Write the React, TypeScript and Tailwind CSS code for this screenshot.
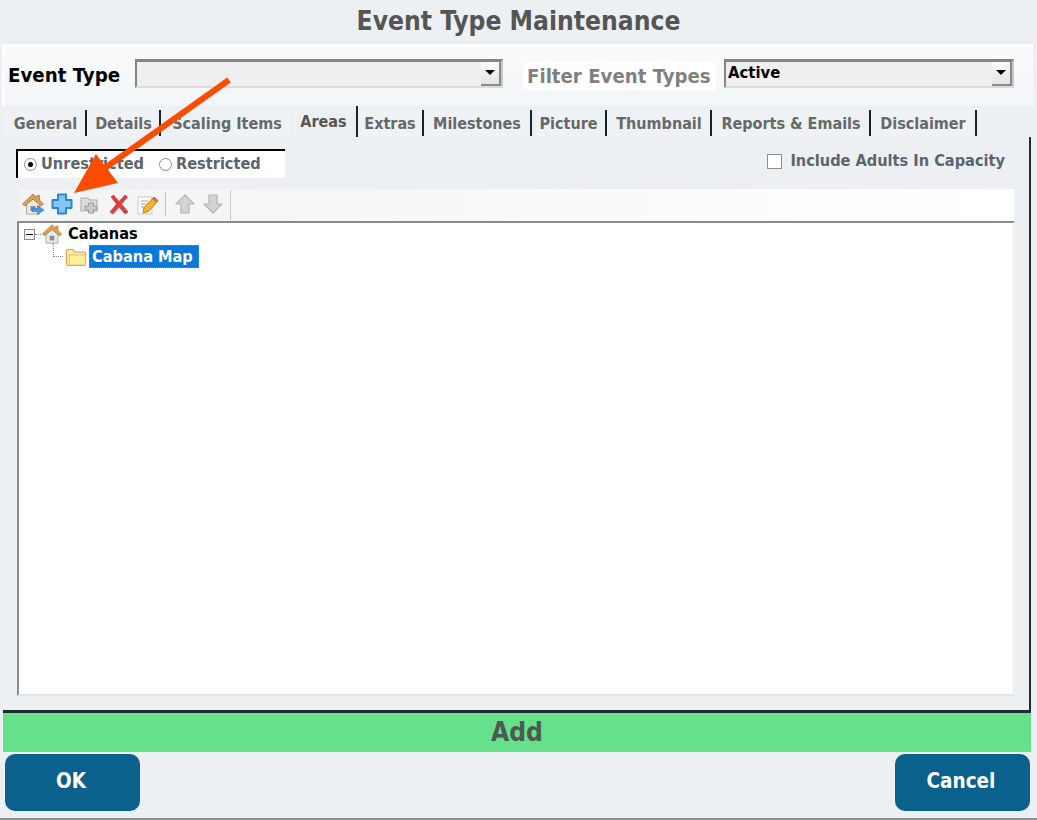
import type { ReactNode } from 'react';

const FONT = "font-['DejaVu_Sans_Condensed','DejaVu_Sans',Verdana,sans-serif]";

const tabs = [
    { label: 'General', cls: 'w-[84px] pl-[3px]' },
    { label: 'Details', cls: 'w-[74px] pl-[1px]' },
    { label: 'Scaling Items', cls: 'w-[130px] pl-[2px]', noSep: true },
    { label: 'Areas', cls: 'w-[67px]', active: true },
    { label: 'Extras', cls: 'w-[66px]' },
    { label: 'Milestones', cls: 'w-[108px]' },
    { label: 'Picture', cls: 'w-[75px]' },
    { label: 'Thumbnail', cls: 'w-[105px] pl-[1px]' },
    { label: 'Reports & Emails', cls: 'w-[159px] pl-[1px]' },
    { label: 'Disclaimer', cls: 'w-[106px]' },
];

function DropArrow() {
    return (
        <div className="w-[20px] h-[24px] bg-gradient-to-b from-[#fafafa] to-[#e4e4e4] border-r-2 border-b-2 border-[#8a8a8a] flex items-center justify-center">
            <div className="w-0 h-0 border-l-[5px] border-r-[5px] border-t-[5px] border-l-transparent border-r-transparent border-t-black"></div>
        </div>
    );
}

function Select({ value, cls }: { value?: string; cls: string }) {
    return (
        <div className={`${cls} h-[29px] mb-[4px] bg-[#efefef] border-t-[3px] border-l-2 border-[#858585] border-r-2 border-r-[#c8c8c8] border-b-2 border-b-[#dcdcdc] flex items-center justify-between`}>
            <span className="text-[16.5px] leading-[20px] font-bold text-black pl-[2px] -mt-[2px]">{value}</span>
            <DropArrow />
        </div>
    );
}

function Radio({ checked, label }: { checked?: boolean; label: string }) {
    return (
        <div className="flex items-center gap-[4px]">
            <div className="w-[13px] h-[13px] rounded-full bg-white border border-[#8f8f8f] flex items-center justify-center">
                {checked && <div className="w-[5px] h-[5px] rounded-full bg-black"></div>}
            </div>
            <span className="text-[16.2px] font-bold text-[#5c6470]">{label}</span>
        </div>
    );
}

function Icon({ children, cls }: { children: ReactNode; cls?: string }) {
    return (
        <svg width="24" height="24" viewBox="0 0 24 24" className={`shrink-0 ${cls ?? ''}`}>
            {children}
        </svg>
    );
}

function HouseGlyph() {
    return (
        <>
            <path d="M5.5 12 L12 7 L18.5 12 V22 H5.5 Z" fill="#e9e9e9" stroke="#a8a8a8" strokeWidth="1" />
            <path d="M12 2 L1.5 12 L4 14 L12 7 L20 14 L22.5 12 L18.5 8.2 V3.5 H16 V5.8 Z" fill="#dd9f55" stroke="#b3762e" strokeWidth="0.8" strokeLinejoin="round" />
            <rect x="9.5" y="14" width="5" height="5" fill="#8d8d8d" />
        </>
    );
}

function ToolbarIcons() {
    return (
        <div className="flex items-center gap-[4.5px] pl-[2px] -mt-[2px]">
            <Icon>
                <HouseGlyph />
                <path d="M11 16.5 H16.5 V13.5 L23 18 L16.5 22.5 V19.5 H11 Z" fill="#4a9ae0" stroke="#2f78bd" strokeWidth="0.6" />
            </Icon>
            <Icon>
                <path d="M8 2.5 H16 V8 H21.5 V16 H16 V21.5 H8 V16 H2.5 V8 H8 Z" fill="#86c5f4" stroke="#2a86d2" strokeWidth="2" strokeLinejoin="round" />
            </Icon>
            <Icon>
                <path d="M3 6 H10 L12 8 H19 V19 H3 Z" fill="#dcdcdc" stroke="#b4b4b4" strokeWidth="1.2" />
                <path d="M10.5 11 H15.5 V14 H19 V18 H15.5 V21 H10.5 V18 H7 V14 H10.5 Z" fill="#c8c8c8" stroke="#9c9c9c" strokeWidth="1" />
            </Icon>
            <Icon>
                <path d="M4 5 L6.5 3 L12 9.5 L18 3 L20.5 5 L14.5 12 L21 20 L18 22 L12 15 L6 22 L3 20 L9.5 12 Z" fill="#dd3f40" stroke="#b83033" strokeWidth="0.6" />
            </Icon>
            <Icon>
                <rect x="3" y="5" width="14" height="17" fill="#fbfbfb" stroke="#c9c9c9" />
                <path d="M6 9 H13 M6 12 H11 M6 15 H9" stroke="#a9a9a9" strokeWidth="1" />
                <path d="M8 21 L9 15.5 L19 5 L23 8.5 L13.5 19.5 Z" fill="#f3b52e" stroke="#b87a14" strokeWidth="0.9" />
                <path d="M19 5 L23 8.5 L21.3 10.4 L17.2 6.9 Z" fill="#e2604a" />
            </Icon>
            <div className="w-px h-[24px] bg-[#c4c4c4] ml-[1.5px] mr-[2.5px]"></div>
            <Icon cls="-mr-[1px]">
                <path d="M12 3 L21 12 H16 V21 H8 V12 H3 Z" fill="#d4d4d4" stroke="#b4b4b4" strokeWidth="1.2" strokeLinejoin="round" />
            </Icon>
            <Icon>
                <path d="M12 21 L21 12 H16 V3 H8 V12 H3 Z" fill="#d4d4d4" stroke="#b4b4b4" strokeWidth="1.2" strokeLinejoin="round" />
            </Icon>
            <div className="w-px h-[30px] bg-[#c8c8c8] ml-[1px] mt-[2px]"></div>
        </div>
    );
}

function Tree() {
    return (
        <div className="flex-1 ml-[1px] mr-[2px] bg-white border-t-2 border-l-2 border-[#8b8b8b] border-r-2 border-r-[#eeeeee] border-b-2 border-b-[#e4e4e4] pl-[4px]">
            <div className="flex items-center h-[22px]">
                <div className="w-[11px] h-[11px] border border-[#8a8a8a] bg-[#f4f4f4] flex items-center justify-center ml-[1px]">
                    <div className="w-[7px] h-px bg-black"></div>
                </div>
                <div className="w-[6px] border-t border-dotted border-[#8a8a8a]"></div>
                <svg width="22" height="22" viewBox="0 0 24 24" className="shrink-0">
                    <HouseGlyph />
                </svg>
                <span className="ml-[5px] text-[16.2px] font-bold text-black">Cabanas</span>
            </div>
            <div className="flex items-center h-[23px]">
                <div className="ml-[30px] w-[10px] h-[14px] -mt-[14px] border-l border-b border-dotted border-[#8a8a8a]"></div>
                <svg width="22" height="20" viewBox="0 0 22 20" className="shrink-0 ml-[2px]">
                    <path d="M1.5 17 V4 Q1.5 2.5 3 2.5 H8 L10 5 H19 Q20.5 5 20.5 6.5 V17 Q20.5 18.5 19 18.5 H3 Q1.5 18.5 1.5 17 Z" fill="#fbe9a8" stroke="#d7a54a" strokeWidth="1.2" />
                    <rect x="4.5" y="8" width="16" height="10" fill="#fdf09a" stroke="#e0b85c" strokeWidth="0.8" />
                </svg>
                <span className="ml-[2px] pl-[2px] pr-[5px] h-[23px] leading-[21px] bg-[#0a78d7] border border-dotted border-[#c57a28] text-[16.2px] font-bold text-white">Cabana Map</span>
            </div>
        </div>
    );
}

export default function App() {
    return (
        <div className={`${FONT} relative w-[1037px] h-[820px] bg-[#ecf0f3] overflow-hidden flex flex-col`}>
            {/* Title */}
            <div className="h-[44px] shrink-0 flex items-center justify-center text-[26.2px] font-bold text-[#555555]">
                Event Type Maintenance
            </div>

            {/* Selector row */}
            <div className="h-[62px] shrink-0 ml-[2px] mr-[4px] pl-[4px] pb-[2px] bg-gradient-to-b from-[#f9fbfc] to-[#f3f6f8] border-t-2 border-l-2 border-white flex items-center">
                <span className="w-[127px] shrink-0 text-[20.3px] font-bold text-black whitespace-nowrap">Event Type</span>
                <Select cls="w-[368px] shrink-0" />
                <span className="ml-[20px] mt-[1px] w-[193px] shrink-0 h-[28px] leading-[28px] bg-white pl-[4px] text-[20.2px] font-bold text-[#80807f] whitespace-nowrap">Filter Event Types</span>
                <div className="ml-[8px]">
                    <Select cls="w-[290px]" value="Active" />
                </div>
            </div>

            {/* Tabs */}
            <div className="h-[31px] shrink-0 ml-[3px] mr-[4px] flex items-stretch">
                {tabs.map((t) => (
                    <div
                        key={t.label}
                        className={`${t.cls} flex items-center justify-center text-[16px] font-bold whitespace-nowrap ${t.active ? 'bg-[#ecf0f3] text-[#555555]' : 'bg-[#eef2f5] text-[#66686a] mt-[4px] mb-[1px] pt-[1px]'} ${t.noSep ? '' : 'border-r-2 border-[#17242c]'}`}
                    >
                        {t.label}
                    </div>
                ))}
            </div>

            {/* Tab content */}
            <div className="h-[575px] shrink-0 ml-[3px] mr-[6px] flex flex-col pl-[13px] pr-[12px] pt-[12px] pb-[14px] border-r-2 border-b-2 border-[#1d2b33] shadow-[0_1px_0_#1d2b33]">
                <div className="h-[29px] shrink-0 flex items-start justify-between">
                    <div className="w-[269px] h-[29px] bg-white border-t-2 border-l-2 border-black flex items-center pl-[6px] gap-[15px]">
                        <Radio checked label="Unrestricted" />
                        <Radio label="Restricted" />
                    </div>
                    <div className="flex items-center gap-[8px] mr-[12px] -mt-[2px] h-[28px]">
                        <div className="w-[15px] h-[15px] bg-white border border-[#8f8f8f]"></div>
                        <span className="text-[16.2px] font-bold text-[#5c6470]">Include Adults In Capacity</span>
                    </div>
                </div>
                <div className="h-[32px] shrink-0 mt-[11px] mx-[3px] bg-gradient-to-r from-[#f1f3f5] to-white flex items-center">
                    <ToolbarIcons />
                </div>
                <Tree />
            </div>

            {/* Status */}
            <div className="h-[39px] shrink-0 mt-[1px] ml-[3px] mr-[6px] bg-[#66e08a] flex items-center justify-center text-[26.2px] font-bold text-[#4b5b50]">
                Add
            </div>

            {/* Buttons */}
            <div className="flex justify-between ml-[5px] mr-[7px] mt-[2px]">
                <button className="w-[135px] h-[57px] pb-[2px] pr-[3px] rounded-[10px] bg-[#0a628c] text-white text-[20.5px] font-bold">OK</button>
                <button className="w-[135px] h-[57px] pb-[2px] pr-[3px] rounded-[10px] bg-[#0a628c] text-white text-[20.5px] font-bold">Cancel</button>
            </div>

            <div className="absolute left-0 right-0 bottom-0 h-[2px] bg-[#8a8f93]"></div>

            {/* Annotation arrow */}
            <svg className="absolute left-0 top-0 pointer-events-none" width="1037" height="820" viewBox="0 0 1037 820">
                <path d="M229 80 L105 168" stroke="#fc4c02" strokeWidth="6" fill="none" />
                <path d="M74 193 L96 154 L118 183 Z" fill="#fc4c02" />
            </svg>
        </div>
    );
}
